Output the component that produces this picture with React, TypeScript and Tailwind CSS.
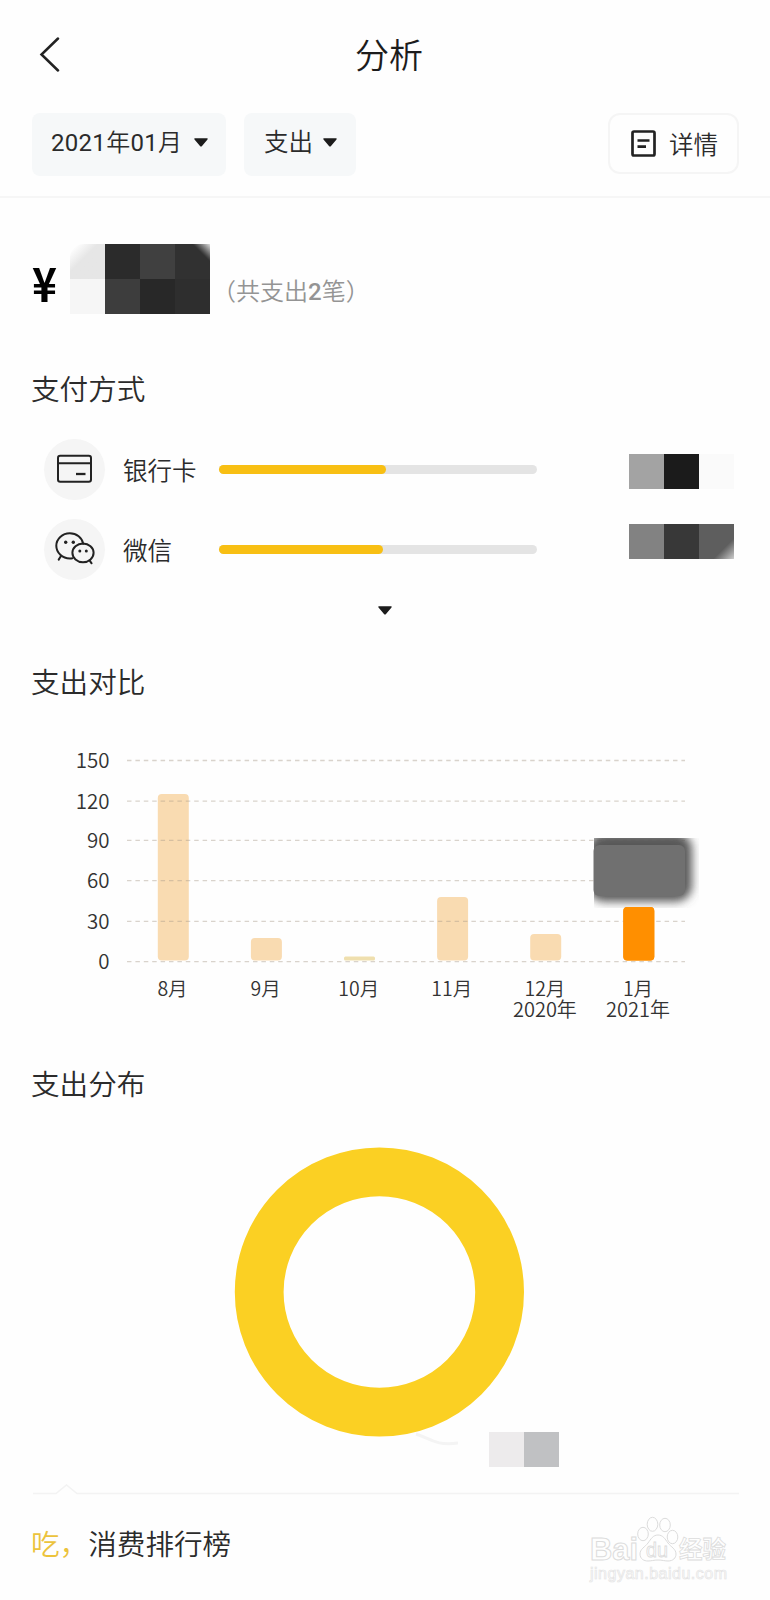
import type { ReactNode } from "react";

interface Payment {
  name: string;
  icon: ReactNode;
  width: number;
}

interface Month {
  label: string;
  year?: string;
  top: number;
  color: string;
}

const CardIcon = () => (
  <svg width="36" height="30" viewBox="0 0 36 30" fill="none" stroke="#222" strokeWidth="2">
    <rect x="1" y="1.7" width="33" height="26" rx="2.2" />
    <path d="M1 9.2h33" />
    <path d="M19 20h9.5" strokeWidth="2.3" />
  </svg>
);

const WechatIcon = () => (
  <svg width="40" height="34" viewBox="0 0 40 34" fill="none" stroke="#222" strokeWidth="2" strokeLinecap="round">
    <path d="M17.4 26.2c-1 .2-1.6.2-2.6.2C7.5 26.4 1.3 20.8 1.3 13.8S7.4 1.3 14.8 1.3c6.7 0 12.4 4.3 13.4 10.5" />
    <path d="M6 24l-2.3 3.6" />
    <ellipse cx="28" cy="20.8" rx="10.6" ry="9.4" />
    <path d="M34.7 28.6l1.9 2.7" />
    <g fill="#222" stroke="none">
      <circle cx="10.7" cy="10.2" r="1.7" />
      <circle cx="18.3" cy="10.2" r="1.7" />
      <circle cx="24.8" cy="19" r="1.5" />
      <circle cx="31.3" cy="19" r="1.5" />
    </g>
  </svg>
);

const Caret = () => (
  <svg width="14" height="9" viewBox="0 0 14 9" fill="#1c1c1c">
    <path d="M1 .3h12c.7 0 .9.7.5 1.1L7.8 8.3c-.4.4-1.2.4-1.6 0L.5 1.4C.1 1 .3.3 1 .3z" />
  </svg>
);

const payments: Payment[] = [
  { name: "银行卡", icon: <CardIcon />, width: 167 },
  { name: "微信", icon: <WechatIcon />, width: 164 },
];

const months: Month[] = [
  { label: "8月", top: 54, color: "#f9dbb1" },
  { label: "9月", top: 198, color: "#f9dbb1" },
  { label: "10月", top: 216.5, color: "#efdfae" },
  { label: "11月", top: 157, color: "#f9dbb1" },
  { label: "12月", year: "2020年", top: 194, color: "#f9dbb1" },
  { label: "1月", year: "2021年", top: 167, color: "#ff8f00" },
];

const ticks = [
  { value: 150, y: 20.5 },
  { value: 120, y: 61.2 },
  { value: 90, y: 100.3 },
  { value: 60, y: 140.7 },
  { value: 30, y: 181.3 },
  { value: 0, y: 221.7 },
];

const SectionTitle = ({ children }: { children: ReactNode }) => (
  <h2 className="pl-[31px] text-[28.6px] leading-[40px] font-[350] text-[#2b2b2b]">{children}</h2>
);

const MonthChart = () => (
  <svg width="770" height="285" viewBox="0 0 770 285" className="mt-[37px] block font-['Noto_Sans_CJK_SC',sans-serif] font-[350]">
    {months.map((m, i) => (
      <rect
        key={m.label}
        x={157.8 + i * 93.1}
        y={m.top}
        width="31"
        height={220.5 - m.top}
        rx={m.top > 210 ? 1.5 : 4}
        fill={m.color}
      />
    ))}
    {ticks.map((t) => (
      <g key={t.value}>
        <text x="109.5" y={t.y + 7.3} textAnchor="end" fontSize="20.5" fill="#333">
          {t.value}
        </text>
        <path d={`M127 ${t.y}H685`} stroke="#a89888" strokeOpacity="0.42" strokeWidth="1.3" strokeDasharray="4.5 3.9" />
      </g>
    ))}
    {months.map((m, i) => (
      <text key={m.label} x={172.5 + i * 93.1} y="255.6" textAnchor="middle" fontSize="19.5" fill="#333">
        {m.label}
      </text>
    ))}
    {months.map(
      (m, i) =>
        m.year && (
          <text key={m.year} x={172.5 + i * 93.1} y="276.6" textAnchor="middle" fontSize="20" fill="#333">
            {m.year}
          </text>
        )
    )}
    <defs>
      <filter id="glow" x="-30%" y="-30%" width="160%" height="160%">
        <feGaussianBlur stdDeviation="5" />
      </filter>
      <clipPath id="tipArea">
        <path d="M594 98h105v70H594z" />
      </clipPath>
    </defs>
    <g clipPath="url(#tipArea)">
      <rect x="588" y="93" width="104" height="68.5" rx="16" fill="#585858" filter="url(#glow)" />
    </g>
    <rect x="593.5" y="105" width="91.5" height="51" rx="6" fill="#707070" />
    {/* mês atual por cima da grade e da sombra */}
    <rect x="623.3" y="167" width="31" height="53.5" rx="4" fill="#ff8f00" />
  </svg>
);

const Watermark = () => (
  <svg
    width="150"
    height="70"
    viewBox="0 0 150 70"
    fill="#fefefe"
    stroke="#dcdcdc"
    strokeWidth="1"
    className="absolute top-[1514px] left-[586px]"
  >
    <text x="4" y="46" fontSize="31" fontWeight="700" textLength="48" lengthAdjust="spacingAndGlyphs" fontFamily="Liberation Sans">
      Bai
    </text>
    <path d="M72 21c-5 0-7 4-10 8s-8 6-8 11c0 5 4 7 8 7 3 0 6-1 10-1s7 1 10 1c5 0 8-3 8-7 0-5-5-7-8-11s-5-8-10-8z" />
    <ellipse cx="57" cy="20" rx="5.3" ry="6.7" />
    <ellipse cx="66.5" cy="10.3" rx="5.3" ry="7" />
    <ellipse cx="79" cy="11" rx="5.3" ry="6.7" />
    <ellipse cx="86.5" cy="23" rx="5.3" ry="6.7" />
    <text x="60" y="43" fontSize="20" fontWeight="400" textLength="22" lengthAdjust="spacingAndGlyphs" strokeWidth="0.8" fontFamily="Liberation Sans">
      du
    </text>
    <text x="93" y="44" fontSize="23.5" fontWeight="700" strokeWidth="0.8" fontFamily="Noto Sans CJK SC">
      经验
    </text>
    <text x="4" y="65" fontSize="16" textLength="137" stroke="#e4e4e4" strokeWidth="0.7" fontFamily="Liberation Sans">
      jingyan.baidu.com
    </text>
  </svg>
);

const App = () => {
  return (
    <div className="relative h-[1600px] w-[770px] overflow-hidden bg-[#fefefe] font-[Roboto,'Noto_Sans_CJK_SC',sans-serif] font-[350] text-[#2b2b2b]">
      {/* Cabeçalho */}
      <header className="grid h-[113px] grid-cols-[1fr_auto_1fr] items-center pb-1 pl-[39px] pr-[31px]">
        <svg width="22" height="36" viewBox="0 0 22 36" fill="none" stroke="#222" strokeWidth="2.5" strokeLinecap="round">
          <path d="M19 1.5L2.5 17.5 19 33.5" />
        </svg>
        <h1 className="pt-[3px] text-[34px] leading-[48px] text-[#1c1c1c]">分析</h1>
      </header>

      {/* Filtros */}
      <div className="flex h-[63px] items-start pl-8 pr-[31px]">
        <button className="flex h-[63px] w-[194px] items-center gap-3 rounded-lg bg-[#f6f8f9] pb-[5px] pl-[19px] text-[24px] leading-8">
          <span className="w-[131px] pt-px tracking-[0.3px] whitespace-nowrap">
            <span className="font-normal">2021</span>年<span className="font-normal">01</span>月
          </span>
          <Caret />
        </button>
        <button className="ml-[18px] flex h-[63px] w-[112px] items-center gap-[10px] rounded-lg bg-[#f6f8f9] pb-[5px] pl-5 text-[24.5px] leading-8">
          <span className="pt-px">支出</span>
          <Caret />
        </button>
        <button className="ml-auto flex h-[61px] w-[131px] items-center gap-[13px] rounded-xl border-2 border-[#f5f5f5] pl-[21px] text-[24.5px] leading-8">
          <svg width="25" height="27" viewBox="0 0 25 27" fill="none" stroke="#222" strokeWidth="2.7">
            <rect x="1.5" y="1.5" width="22" height="24" rx="1.5" />
            <path d="M6.5 10.5h12M6.5 16.7h8.5" />
          </svg>
          <span className="pt-1 whitespace-nowrap">详情</span>
        </button>
      </div>
      <div className="mt-5 h-[2px] bg-[#f6f6f6]" />

      {/* Total do mês */}
      <div className="mt-[46px] flex h-[70px] items-start">
        <span className="w-[70px] pl-8 pt-[12px]">
          <span className="inline-block origin-left scale-x-90 font-['Noto_Sans_CJK_SC',sans-serif] text-[47px] leading-[52px] font-bold text-black">
            ¥
          </span>
        </span>
        <div className="grid h-[70px] w-[140px] grid-cols-4 grid-rows-2">
          <div className="rounded-tl-[14px] bg-linear-to-br from-[#fefefe] from-10% to-[#e6e6e6] to-40%" />
          <div className="bg-[#2b2b2b]" />
          <div className="bg-[#404040]" />
          <div className="bg-linear-to-bl from-[#e0e0e0] to-[#313131] to-25%" />
          <div className="bg-[#f6f6f6]" />
          <div className="bg-[#3d3d3d]" />
          <div className="bg-[#282828]" />
          <div className="bg-[#2e2e2e]" />
        </div>
        <span className="ml-[2px] pt-[32px] text-[24px] leading-8 text-[#949494]">
          （共支出<span className="font-medium">2</span>笔）
        </span>
      </div>

      <div className="mt-[56px]">
        <SectionTitle>支付方式</SectionTitle>
      </div>
      <div className="mt-[19px] flex">
        <div className="w-[629px]">
          {payments.map((p) => (
            <div key={p.name} className="flex h-20 items-center pl-11">
              <div className="flex h-[61px] w-[61px] items-center justify-center rounded-full bg-[#f5f5f5]">{p.icon}</div>
              <span className="ml-[18px] w-[96px] pt-[5px] text-[24.5px] leading-8">{p.name}</span>
              <div className="h-[9px] w-[318px] rounded-full bg-[#e4e4e4]">
                <div className="h-full rounded-full bg-[#f8bf13]" style={{ width: p.width }} />
              </div>
            </div>
          ))}
        </div>
        <div className="flex flex-col gap-[35px] pt-[25px]">
          <div className="flex h-[35px]">
            <div className="w-[35px] bg-[#a3a3a3]" />
            <div className="w-[35px] bg-[#1b1b1b]" />
            <div className="w-[35px] bg-[#fafafa]" />
          </div>
          <div className="flex h-[35px]">
            <div className="w-[35px] bg-[#828282]" />
            <div className="w-[35px] bg-[#383838]" />
            <div className="w-[35px] bg-linear-to-tl from-[#cfcfcf] to-[#5e5e5e] to-30%" />
          </div>
        </div>
      </div>
      <div className="mt-[17px] flex h-2 justify-center">
        <Caret />
      </div>

      <div className="mt-[49px]">
        <SectionTitle>支出对比</SectionTitle>
      </div>
      <MonthChart />

      <div className="mt-[40px]">
        <SectionTitle>支出分布</SectionTitle>
      </div>
      {/* Distribuição: uma única categoria */}
      <svg width="770" height="379" viewBox="0 2 770 379" fill="none" className="block">
        <path d="M416 331c15 5 20 12 42 9" stroke="#f4f4f4" strokeWidth="3" />
        <circle cx="379.4" cy="189" r="120.2" stroke="#fbd023" strokeWidth="48.8" />
        <path d="M489 329h35v35h-35z" fill="#edebec" />
        <path d="M524 329h35v35h-35z" fill="#c0c1c3" />
      </svg>
      <svg width="770" height="12" viewBox="0 0 770 12" fill="none" className="block">
        <path d="M33 9.5H56L66.5 1 77 9.5H739" stroke="#f3f3f3" strokeWidth="1.6" />
      </svg>
      <h2 className="mt-[29px] pl-[31px] text-[28.6px] leading-[40px]">
        <span className="text-[#ecc33c]">吃，</span>消费排行榜
      </h2>
      <Watermark />
    </div>
  );
};

export default App;
